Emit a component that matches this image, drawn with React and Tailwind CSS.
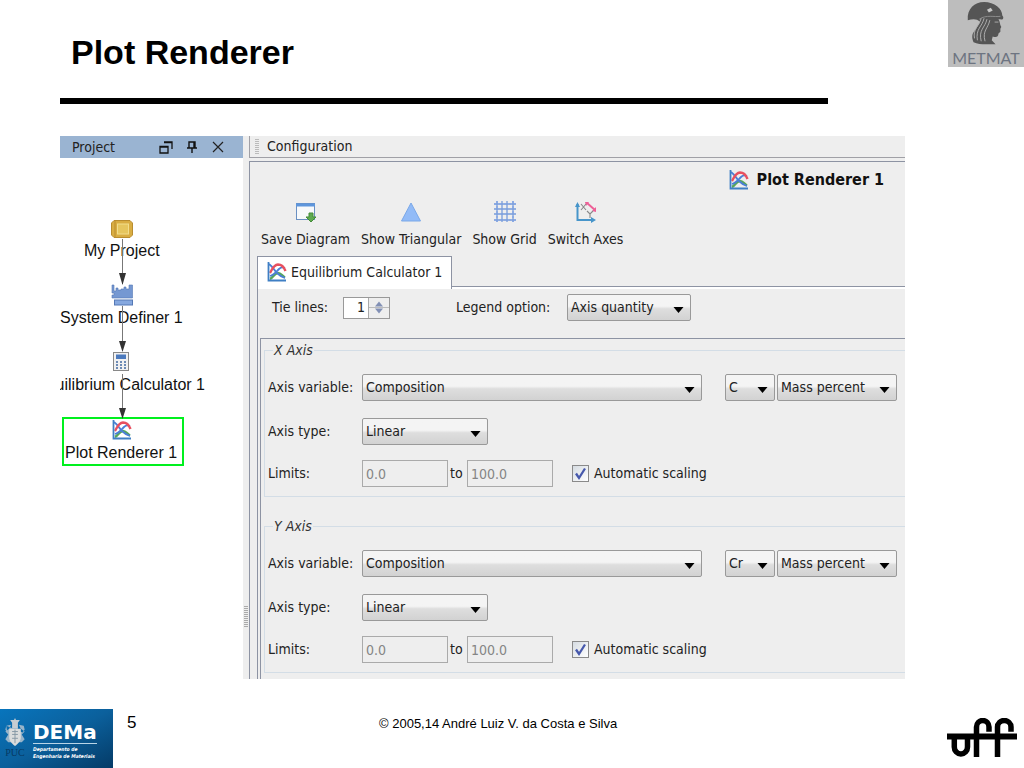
import React from "react";

const UI = "font-['DejaVu_Sans_Condensed','Noto_Sans',sans-serif]";

function PlotIcon({ className }) {
  return (
    <svg viewBox="0 0 20 20" className={className} fill="none" aria-hidden="true">
      <path d="M3 17C6 16 7 11 11 11C14 11 15 14 18 15.500" stroke="#57a65a" strokeWidth="2.4" />
      <path d="M2 2C6 5 7 8 10 11C12 13 15 15 18 16M3 14C7 13 9 10 12 7C14 5 16 5 18 6" stroke="#4b7fd6" strokeWidth="1.8" />
      <path d="M3 11C5 8 6 3 11 2.500C15 2.500 17 5 18.500 9" stroke="#e8505f" strokeWidth="2.4" />
      <path d="M1.500 0V18.500H19" stroke="#3f7fc4" strokeWidth="1.8" />
    </svg>
  );
}

function Select({ id, label, value, className }) {
  return (
    <div className={`relative ${className}`}>
      <select
        id={id}
        aria-label={label}
        defaultValue={value}
        className="block h-[27px] w-full appearance-none rounded-xs border border-[#999] bg-linear-to-b from-[#f4f4f4] from-45% via-[#dedede] via-55% to-[#d2d2d2] pl-[3px] text-[14px] text-[#222]"
      >
        <option>{value}</option>
      </select>
      <svg viewBox="0 0 10 6" className="pointer-events-none absolute top-[13px] right-[7px] h-[6px] w-[11px]" aria-hidden="true">
        <path d="M0 0H10L5 6Z" fill="#000" />
      </svg>
    </div>
  );
}

function AxisGroup({ axis, element }) {
  const id = axis.toLowerCase();
  return (
    <fieldset className="ml-[3px] border border-r-0 border-[#d3dde6] pr-2 pb-[9px] pl-[3px]">
      <legend className="ml-[5px] h-4 px-px text-[14px] leading-4 text-[#333] italic">{axis} Axis</legend>
      <div className="flex items-center pt-4">
        <label htmlFor={`${id}-var`} className="w-[94px] shrink-0 whitespace-nowrap">Axis variable:</label>
        <Select id={`${id}-var`} value="Composition" className="min-w-0 flex-1" />
        <Select label={`${axis} element`} value={element} className="ml-[23px] w-[50px]" />
        <Select label={`${axis} unit`} value="Mass percent" className="ml-[2px] w-[120px]" />
      </div>
      <div className="flex items-center pt-[17px]">
        <label htmlFor={`${id}-type`} className="w-[94px] shrink-0">Axis type:</label>
        <Select id={`${id}-type`} value="Linear" className="w-[126px]" />
      </div>
      <div className="flex items-center pt-[15px]">
        <label htmlFor={`${id}-min`} className="w-[94px] shrink-0">Limits:</label>
        <input id={`${id}-min`} disabled defaultValue="0.0" className="h-[27px] w-[86px] border border-[#aaa] bg-[#eee] px-[3px] text-[#858585]" />
        <label htmlFor={`${id}-max`} className="w-[19px] pl-[2px]">to</label>
        <input id={`${id}-max`} disabled defaultValue="100.0" className="h-[27px] w-[86px] border border-[#aaa] bg-[#eee] px-[3px] text-[#858585]" />
        <label className="ml-[19px] flex items-center gap-[5px] whitespace-nowrap">
          <span className="relative block size-[17px]">
            <input type="checkbox" defaultChecked className="peer block size-[17px] appearance-none border border-[#8a8a8a] bg-linear-to-br from-[#d6dce2] to-white" />
            <svg viewBox="0 0 17 17" className="pointer-events-none absolute inset-0 hidden peer-checked:block" aria-hidden="true">
              <path d="M4 8.5L7 13L13 3.5" fill="none" stroke="#4658ac" strokeWidth="2.3" />
            </svg>
          </span>
          Automatic scaling
        </label>
      </div>
    </fieldset>
  );
}

function Tool({ label, children }) {
  return (
    <button type="button" className="flex flex-col items-center gap-[6px] whitespace-nowrap">
      <svg viewBox="0 0 22 22" className="size-[22px]" fill="none" aria-hidden="true">{children}</svg>
      <span className="leading-5">{label}</span>
    </button>
  );
}

function ProjectTree() {
  const label = "absolute text-[16px] leading-5 whitespace-nowrap text-[#111]";
  return (
    <div className="relative flex-1 overflow-hidden bg-white font-['Liberation_Sans',Arial,sans-serif]">
      <svg viewBox="0 0 22 18" className="absolute top-[62px] left-[51px] h-[18px] w-[22px]" aria-hidden="true">
        <path d="M3 .5H19L21.5 3V15L19 17.5H3L.5 15V3Z" fill="#d9ad42" stroke="#b98d30" />
        <path d="M4 1V17" stroke="#b98d30" />
        <rect x="6.500" y="4" width="11" height="10" fill="#e6c65e" stroke="#f2dd8c" />
      </svg>
      <svg viewBox="0 0 22 22" className="absolute top-[126px] left-[51px] size-[22px]" aria-hidden="true">
        <path d="M1 1H3V7H5V4H7V6H10V5H13V3H15V5H18V1H21.500V14H1V11H3V9H1Z" fill="#7598d2" stroke="#5478b5" strokeWidth=".6" />
        <rect x="3.500" y="16" width="18" height="5" fill="#86a8df" stroke="#5478b5" />
      </svg>
      <svg viewBox="0 0 16 19" className="absolute top-[194px] left-[53px] h-[19px] w-4" aria-hidden="true">
        <rect x=".5" y=".5" width="15" height="18" fill="#f1f1f1" stroke="#888" />
        <rect x="3" y="2.500" width="10" height="4.500" fill="#4c7abd" />
        <path d="M3 10H13M3 13H13M3 16H13" stroke="#6d8bb5" strokeWidth="2" strokeDasharray="2 2" />
      </svg>
      <PlotIcon className="absolute top-[262px] left-[52px] size-5" />
      <span className={`${label} top-[83px] left-[24px]`}>My Project</span>
      <span className={`${label} top-[150px] left-0`}>System Definer 1</span>
      <span className={`${label} top-[217px] right-[38px]`}>Equilibrium Calculator 1</span>
      <span className={`${label} top-[285px] left-[5px]`}>Plot Renderer 1</span>
      <div className="absolute top-[259px] left-[2px] h-[49px] w-[122px] border-2 border-[#00f01e]" />
      <svg viewBox="0 0 183 270" className="absolute top-0 left-0 h-[270px] w-[183px]" aria-hidden="true">
        <path d="M62.500 81V126M62.500 148V192M62.500 216V260" stroke="#777" />
        <path d="M59 115H66L62.500 127ZM59 183H66L62.500 194ZM59 250H66L62.500 261Z" fill="#333" />
      </svg>
    </div>
  );
}

function MetmatLogo() {
  return (
    <div className="flex h-[67px] w-[76px] shrink-0 flex-col items-center bg-[#bdbdbd]">
      <svg viewBox="0 0 40 48" className="mt-px h-[46px] w-[40px] shrink-0" aria-hidden="true">
        <path d="M1 20C0 8 8 1 18 1C29 1 37 8 37 15C39 17 38 20 35 19L33 19C35 22 34 24 36 27L35 29L35 32L33 34C33 38 30 38 27 37L26 41L30 45C22 45 13 46 7 43C5 38 5 34 9 30L14 22C10 18 6 19 1 20Z" fill="#555" />
        <path d="M15 18C13 26 6 29 8 39M18 18C16 27 9 29 11 41M21 19C19 28 12 30 15 42M24 20C22 29 16 31 19 42" stroke="#b0b0b0" fill="none" />
        <path d="M13 19C20 14 29 17 35 16" stroke="#8d8d8d" fill="none" />
        <path d="M21 9L25 7L27 10L23 12Z" fill="#c9c9c9" />
        <path d="M29 22L33 22" stroke="#aaa" />
      </svg>
      <span className="font-['Lato',sans-serif] text-[16px] leading-[22px] text-[#6d7481]">METMAT</span>
    </div>
  );
}

function DemaLogo() {
  return (
    <div className="flex h-[59px] w-[113px] shrink-0 items-start bg-linear-to-br from-[#0875bd] via-[#0b609c] to-[#053b67] pl-1 font-['DejaVu_Sans',sans-serif] text-white">
      <div className="flex w-[22px] flex-col items-center pt-[9px]">
        <svg viewBox="0 0 22 30" className="h-[29px] w-[22px]" aria-hidden="true">
          <path d="M8 11V5L6 2H10L11 0L12 2H16L14 5V11Z" fill="#c7cdd2" />
          <path d="M2 8L7 7L5 11L1 14L4 17L1 22L4 25H18L21 22L18 17L21 14L17 11L15 7L20 8L21 12L19 15M2 8L1 12L3 15" fill="#98b4c9" />
          <path d="M5 11H17V20C17 24 14 27 11 29C8 27 5 24 5 20Z" fill="#dadcdc" />
          <path d="M8 14H14M8 17H14M8 21H14M11 12V26" stroke="#8798a5" />
        </svg>
        <span className="font-['Liberation_Serif',serif] text-[10px] leading-[11px] text-[#073963]">PUC</span>
      </div>
      <div className="ml-[7px] pt-[12px] whitespace-nowrap">
        <div className="border-b border-[#b9d5e7] text-[20px] leading-[22px] font-bold">DEMa</div>
        <div className={`pt-[2px] text-[5px] leading-[7px] font-bold italic ${UI}`}>Departamento de<br />Engenharia de Materiais</div>
      </div>
    </div>
  );
}

export default function App() {
  return (
    <div className="flex min-h-screen flex-col bg-white font-['Liberation_Sans',Arial,sans-serif] text-black">
      <header className="flex items-start justify-between">
        <div className="ml-[60px] w-3/4 pt-8">
          <h1 className="pl-[11px] text-[34px] leading-10 font-bold">Plot Renderer</h1>
          <div className="mt-[26px] h-[6px] bg-black" />
        </div>
        <MetmatLogo />
      </header>

      <main className={`mt-8 mr-[119px] ml-[60px] flex bg-[#eee] text-[14px] text-[#222] ${UI}`}>
        <section className="flex w-[183px] shrink-0 flex-col">
          <div className="flex h-[22px] items-center bg-[#9ab4d2] pl-3">
            <h2 className="flex-1">Project</h2>
            <div className="flex items-center gap-[13px] pr-[18px]">
              <button type="button" aria-label="Restore">
                <svg viewBox="0 0 14 14" className="block size-[14px]" fill="none" stroke="#111" strokeWidth="1.300"><path d="M1 6.500H9V13H1ZM1 7H9M5 2H13V9M5 2.500H13" /></svg>
              </button>
              <button type="button" aria-label="Pin">
                <svg viewBox="0 0 12 14" className="block h-[14px] w-3" fill="none" stroke="#111" strokeWidth="1.4"><path d="M3 8V2H9V8M1 8H11M6 8V13M8 2V8" /></svg>
              </button>
              <button type="button" aria-label="Close">
                <svg viewBox="0 0 14 14" className="block size-[14px]" fill="none" stroke="#222" strokeWidth="1.2"><path d="M2 2L12 12M12 2L2 12" /></svg>
              </button>
            </div>
          </div>
          <ProjectTree />
        </section>

        <div className="flex w-[6px] shrink-0 flex-col items-center justify-end pb-[52px]">
          <svg viewBox="0 0 4 21" className="h-[21px] w-1" aria-hidden="true"><path d="M2 0V21" stroke="#aaa" strokeWidth="4" strokeDasharray="1 1" /></svg>
        </div>

        <section className="min-w-0 flex-1">
          <div className="flex h-[22px] items-center border-b border-l border-[#a0a0a6] pl-[5px]">
            <svg viewBox="0 0 4 16" className="mr-2 h-4 w-1" aria-hidden="true"><path d="M2 0V16" stroke="#bbb" strokeWidth="4" strokeDasharray="1 1" /></svg>
            <h2>Configuration</h2>
          </div>
          <div className="mt-[3px] border-t border-l border-[#8d93a3] pl-[7px]">
            <div className="flex h-[35px] items-center justify-end gap-2 pr-[21px]">
              <PlotIcon className="size-5" />
              <h3 className="text-[16px] font-bold text-[#111]">Plot Renderer 1</h3>
            </div>
            <div className="flex gap-[11px] pt-[4px] pb-[7px] pl-1">
              <Tool label="Save Diagram">
                <rect x="1.500" y="2.500" width="18" height="16" fill="#f7f9fb" stroke="#6a90c2" />
                <path d="M1 4H20" stroke="#5e96dc" strokeWidth="3" />
                <path d="M14 12H18V16H21L16 21L11 16H14Z" fill="#5eaa50" stroke="#438b39" />
              </Tool>
              <Tool label="Show Triangular"><path d="M11 2L20.500 20H1.500Z" fill="#92bbf7" stroke="#7aa8e8" /></Tool>
              <Tool label="Show Grid">
                <path d="M3 0V21M8 0V21M13 0V21M19 0V21M0 3H22M0 8H22M0 13H22M0 19H22" stroke="#779cdc" strokeWidth="1.300" />
                <path d="M3 0V21M19 0V21M0 3H22M0 19H22" stroke="#8dabe3" strokeWidth="2" strokeDasharray="2 3" />
              </Tool>
              <Tool label="Switch Axes">
                <path d="M2.500 3V19H19" stroke="#4795ca" strokeWidth="2" />
                <path d="M0 6L2.500 1L5 6ZM16 16L21 19L16 22Z" fill="#4795ca" />
                <path d="M12 2L20 9" stroke="#ed6097" strokeWidth="2" />
                <path d="M10 1H14L11 5ZM21 6V11L17 10Z" fill="#ed6097" />
                <path d="M6 3L11 9M11 3L6 9M12 10L15 13L18 10M15 13V17" stroke="#888" strokeWidth="1.100" />
              </Tool>
            </div>
            <div className="flex items-end">
              <button type="button" className="flex h-[33px] items-center gap-1 border border-b-0 border-[#8d93a3] bg-white pr-[9px] pb-[2px] pl-[9px] whitespace-nowrap">
                <PlotIcon className="size-5" />
                Equilibrium Calculator 1
              </button>
              <div className="h-[3px] flex-1 border-t border-[#8d93a3] bg-white" />
            </div>
            <div className="border-l border-[#8d93a3] pl-[2px]">
              <div className="flex h-[49px] items-center pb-[12px] pl-3">
                <label htmlFor="tie-lines" className="w-[71px] shrink-0">Tie lines:</label>
                <div className="flex h-[22px] w-[47px] items-center border border-[#999] bg-white">
                  <input id="tie-lines" defaultValue="1" className="w-[21px] min-w-0 text-right" />
                  <div className="ml-[3px] flex h-full flex-1 flex-col border-l border-[#aaa] bg-[#eee]">
                    <button type="button" aria-label="Increase" className="flex flex-1 items-end justify-center border-b border-[#bbb]">
                      <svg viewBox="0 0 10 6" className="h-[6px] w-2" aria-hidden="true"><path d="M5 0L10 6H0Z" fill="#8290b5" /></svg>
                    </button>
                    <button type="button" aria-label="Decrease" className="flex flex-1 items-start justify-center">
                      <svg viewBox="0 0 10 6" className="h-[6px] w-2" aria-hidden="true"><path d="M0 0H10L5 6Z" fill="#8290b5" /></svg>
                    </button>
                  </div>
                </div>
                <label htmlFor="legend-option" className="ml-[66px] w-[111px] shrink-0 whitespace-nowrap">Legend option:</label>
                <Select id="legend-option" value="Axis quantity" className="w-[124px]" />
              </div>
              <div className="flex flex-col gap-[21px] border-t border-l border-[#8d93a3] pt-[3px] pb-[6px]">
                <AxisGroup axis="X" element="C" />
                <AxisGroup axis="Y" element="Cr" />
              </div>
            </div>
          </div>
        </section>
      </main>

      <footer className="mt-[30px] flex items-start">
        <DemaLogo />
        <span className="w-[266px] pt-1 pl-[14px] text-[17px] leading-5">5</span>
        <p className="flex-1 pt-[6px] text-[13px] leading-[18px] whitespace-nowrap">© 2005,14 André Luiz V. da Costa e Silva</p>
        <svg viewBox="0 0 70 41" className="mt-[9px] mr-[7px] h-[41px] w-[70px] shrink-0" fill="none" stroke="#000" strokeWidth="5.500" role="img" aria-label="uff">
          <path d="M0 18.500H70" strokeWidth="6" />
          <path d="M7.300 18V29A6.600 7 0 0 0 20.500 29V18M29.500 39V9A6.250 6.500 0 0 1 42 9V13.700M50.500 39V9A6.750 6.500 0 0 1 64 9V13.700" />
        </svg>
      </footer>
    </div>
  );
}
